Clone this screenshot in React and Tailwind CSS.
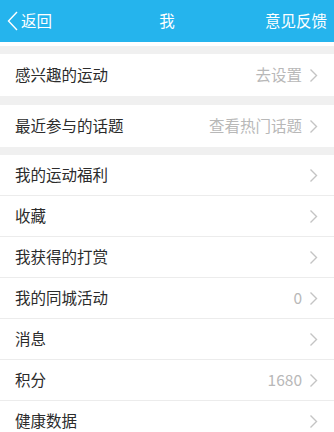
import React from 'react';

const font = { fontFamily: '"Noto Sans CJK SC", "Noto Sans", sans-serif' };

function Chevron() {
  return (
    <svg width="9" height="15" viewBox="0 0 9 15" className="shrink-0">
      <polyline points="1.5,1.5 7.5,7.5 1.5,13.5" fill="none" stroke="#c4c4c4" strokeWidth="1.4" />
    </svg>
  );
}

function Row({ label, value, last }) {
  return (
    <div className={`flex items-center justify-between bg-white pl-[15px] pr-[16px] ${last ? 'h-[42px]' : 'h-[41px] border-b border-[#ececec]'}`}>
      <span className="text-[15.5px] text-[#2b2b2b]">{label}</span>
      <div className="flex items-center gap-[7px]">
        {value !== undefined && <span className="text-[15.5px] text-[#b8b8b8]">{value}</span>}
        <Chevron />
      </div>
    </div>
  );
}

export default function App() {
  const items = [
    { label: '我的运动福利' },
    { label: '收藏' },
    { label: '我获得的打赏' },
    { label: '我的同城活动', value: '0' },
    { label: '消息' },
    { label: '积分', value: '1680' },
    { label: '健康数据' },
  ];

  return (
    <div className="w-[334px] h-[432px] overflow-hidden bg-[#f0f0f0]" style={font}>
      {/* 顶部导航 */}
      <div className="h-[42px] bg-[#25b4ed] flex items-center justify-between px-[7px] text-white text-[15.5px]">
        <div className="flex items-center gap-[3px] w-[90px]">
          <svg width="11" height="20" viewBox="0 0 11 20">
            <polyline points="10,1 1.5,10 10,19" fill="none" stroke="#ffffff" strokeWidth="1.4" />
          </svg>
          <span>返回</span>
        </div>
        <span>我</span>
        <div className="w-[90px] text-right">意见反馈</div>
      </div>
      <div className="h-[4px] bg-white" />
      <div className="h-[8px]" />
      <Row label="感兴趣的运动" value="去设置" last />
      <div className="h-[9px]" />
      <Row label="最近参与的话题" value="查看热门话题" last />
      <div className="h-[8px]" />
      {items.map((it, i) => (
        <Row key={i} label={it.label} value={it.value} />
      ))}
    </div>
  );
}
